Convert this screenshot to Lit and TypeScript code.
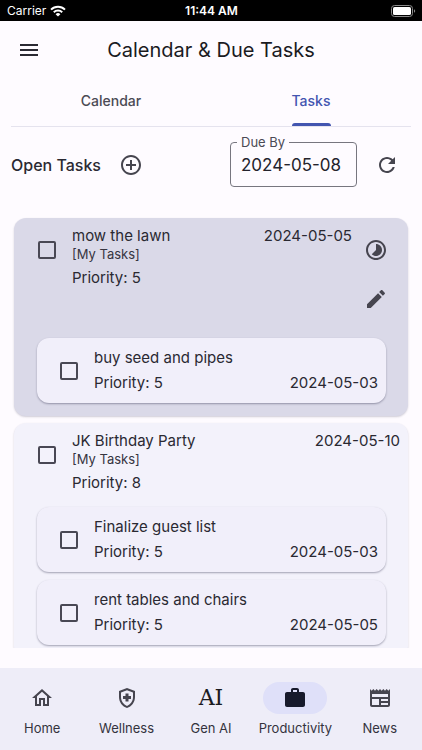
import { LitElement, html, css, svg, nothing } from "lit";
import { customElement, property } from "lit/decorators.js";
import { classMap } from "lit/directives/class-map.js";

const ICONS: Record<string, string> = {
  menu: "M3 18h18v-2H3v2zm0-5h18v-2H3v2zm0-7v2h18V6H3z",
  add: "M13 7h-2v4H7v2h4v4h2v-4h4v-2h-4V7zm-1-5C6.48 2 2 6.48 2 12s4.48 10 10 10 10-4.48 10-10S17.52 2 12 2zm0 18c-4.41 0-8-3.59-8-8s3.59-8 8-8 8 3.59 8 8-3.59 8-8 8z",
  refresh:
    "M17.65 6.35C16.2 4.9 14.21 4 12 4c-4.42 0-7.99 3.58-7.99 8s3.57 8 7.99 8c3.73 0 6.84-2.55 7.73-6h-2.08c-.82 2.33-3.04 4-5.65 4-3.31 0-6-2.69-6-6s2.69-6 6-6c1.66 0 3.14.69 4.22 1.78L13 11h7V4l-2.35 2.35z",
  progress:
    "M16.24 7.76C15.07 6.59 13.54 6 12 6v6l-4.24 4.24c2.34 2.34 6.14 2.34 8.49 0 2.34-2.34 2.34-6.14-.01-8.48zM12 2C6.48 2 2 6.48 2 12s4.48 10 10 10 10-4.48 10-10S17.52 2 12 2zm0 18c-4.41 0-8-3.59-8-8s3.59-8 8-8 8 3.59 8 8-3.59 8-8 8z",
  edit: "M3 17.25V21h3.75L17.81 9.94l-3.75-3.75L3 17.25zM20.71 7.04c.39-.39.39-1.02 0-1.41l-2.34-2.34c-.39-.39-1.02-.39-1.41 0l-1.83 1.83 3.75 3.75 1.83-1.83z",
  home: "M12 5.69l5 4.5V18h-2v-6H9v6H7v-7.81l5-4.5M12 3L2 12h3v8h6v-6h2v6h6v-8h3L12 3z",
  wellness:
    "M10.5 13H8v-3h2.5V7.5h3V10H16v3h-2.5v2.5h-3V13zM12 2L4 5v6.09c0 5.05 3.41 9.76 8 10.91 4.59-1.15 8-5.86 8-10.91V5l-8-3zm6 9.09c0 4-2.55 7.7-6 8.83-3.45-1.13-6-4.82-6-8.83v-4.7l6-2.25 6 2.25v4.7z",
  work: "M20 6h-4V4c0-1.11-.89-2-2-2h-4c-1.11 0-2 .89-2 2v2H4c-1.11 0-1.99.89-1.99 2L2 19c0 1.11.89 2 2 2h16c1.11 0 2-.89 2-2V8c0-1.11-.89-2-2-2zm-6 0h-4V4h4v2z",
  news: "M22 3l-1.67 1.67L18.67 3 17 4.67 15.33 3l-1.66 1.67L12 3l-1.67 1.67L8.67 3 7 4.67 5.33 3 3.67 4.67 2 3v16c0 1.1.9 2 2 2h16c1.1 0 2-.9 2-2V3zM11 19H4v-6h7v6zm9 0h-7v-2h7v2zm0-4h-7v-2h7v2zm0-4H4V8h16v3z",
};

const icon = (name: string) =>
  html`<svg class="icon" viewBox="0 0 24 24" aria-hidden="true">${svg`<path d=${ICONS[name]} />`}</svg>`;

interface Task {
  title: string;
  list?: string;
  priority: number;
  due: string;
  started?: boolean;
  subtasks?: Task[];
}

const TASKS: Task[] = [
  {
    title: "mow the lawn",
    list: "[My Tasks]",
    priority: 5,
    due: "2024-05-05",
    started: true,
    subtasks: [{ title: "buy seed and pipes", priority: 5, due: "2024-05-03" }],
  },
  {
    title: "JK Birthday Party",
    list: "[My Tasks]",
    priority: 8,
    due: "2024-05-10",
    subtasks: [
      { title: "Finalize guest list", priority: 5, due: "2024-05-03" },
      { title: "rent tables and chairs", priority: 5, due: "2024-05-05" },
    ],
  },
];

const NAV = [
  { label: "Home", icon: "home" },
  { label: "Wellness", icon: "wellness" },
  { label: "Gen AI", icon: "" },
  { label: "Productivity", icon: "work", active: true },
  { label: "News", icon: "news" },
];

const shared = css`
  * {
    box-sizing: border-box;
  }
  button {
    display: grid;
    place-items: center;
    padding: 0;
    border: 0;
    background: none;
    color: inherit;
    font: inherit;
    cursor: pointer;
  }
  .icon {
    display: block;
    width: 24px;
    height: 24px;
    fill: currentColor;
  }
  .check {
    appearance: none;
    flex: none;
    width: 18px;
    height: 18px;
    margin: 0;
    border: 2px solid #494854;
    border-radius: 2px;
  }
  .check:checked {
    background: #4355b0;
    border-color: #4355b0;
  }
`;

@customElement("task-card")
class TaskCard extends LitElement {
  @property({ attribute: false }) task!: Task;

  static styles = [
    shared,
    css`
      :host {
        display: block;
      }
      .card {
        padding: 8px 8px 13px 23px;
        border-radius: 12px;
        background: #f3f2fb;
        box-shadow: 0 1px 2px rgba(40, 40, 70, 0.22);
      }
      .started {
        background: #dad9e8;
      }
      .head {
        display: flex;
        align-items: flex-start;
        min-height: 76px;
      }
      .started .head {
        min-height: 112px;
      }
      .head .check {
        margin: 15px 16px 0 1px;
      }
      .text {
        flex: 1;
        min-width: 0;
      }
      .row {
        display: flex;
        justify-content: space-between;
        line-height: 20px;
      }
      .list {
        font-size: 13px;
        line-height: 16px;
        color: #36353f;
      }
      .priority {
        margin-top: 6px;
        line-height: 20px;
      }
      .actions {
        display: grid;
        width: 48px;
        height: 97px;
        color: #46454f;
      }
      .subs {
        display: grid;
        gap: 8px;
        margin-right: 14px;
      }
      .sub {
        display: flex;
        align-items: center;
        gap: 16px;
        padding: 10px 8px 10px 23px;
        border-radius: 12px;
        background: #f1effa;
        box-shadow: 0 1px 2px rgba(40, 40, 70, 0.4);
      }
      .sub .row + .row {
        margin-top: 5px;
      }
    `,
  ];

  render() {
    const t = this.task;
    return html`
      <article class=${classMap({ card: true, started: !!t.started })}>
        <div class="head">
          <input class="check" type="checkbox" id="main" />
          <div class="text">
            <div class="row">
              <label for="main">${t.title}</label>
              <time>${t.due}</time>
            </div>
            <div class="list">${t.list}</div>
            <div class="priority">Priority: ${t.priority}</div>
          </div>
          ${t.started
            ? html`<div class="actions">
                <button aria-label="In progress">${icon("progress")}</button>
                <button aria-label="Edit">${icon("edit")}</button>
              </div>`
            : nothing}
        </div>
        <div class="subs">
          ${t.subtasks?.map(
            (s, i) => html`<div class="sub">
              <input class="check" type="checkbox" id="sub-${i}" />
              <div class="text">
                <div class="row"><label for="sub-${i}">${s.title}</label></div>
                <div class="row">
                  <span>Priority: ${s.priority}</span><time>${s.due}</time>
                </div>
              </div>
            </div>`
          )}
        </div>
      </article>
    `;
  }
}

@customElement("app-root")
class AppRoot extends LitElement {
  static styles = [
    shared,
    css`
      :host {
        display: flex;
        flex-direction: column;
        height: 100vh;
        background: #fefbff;
        color: #2a2932;
        font-family: Inter, "Liberation Sans", sans-serif;
        font-size: 15px;
      }
      .status {
        display: grid;
        grid-template-columns: 1fr auto 1fr;
        align-items: center;
        height: 21px;
        padding: 0 6px 0 7px;
        background: #000;
        color: #fff;
        font-size: 12px;
      }
      .carrier {
        display: flex;
        align-items: center;
        gap: 4px;
      }
      .wifi {
        width: 16px;
        height: 12px;
      }
      .clock {
        font-size: 12px;
        font-weight: 600;
      }
      .battery {
        justify-self: end;
        width: 25px;
        height: 12px;
      }
      .appbar {
        display: grid;
        grid-template-columns: 58px 1fr 58px;
        align-items: center;
        height: 57px;
      }
      .appbar button {
        height: 48px;
      }
      h1 {
        margin: 0;
        font-size: 20px;
        font-weight: 400;
        line-height: 28px;
        text-align: center;
        color: #1b1b1f;
        white-space: nowrap;
      }
      .tabs {
        display: grid;
        grid-template-columns: 1fr 1fr;
        flex: none;
        height: 49px;
        margin: 0 11px;
        border-bottom: 1px solid #e5e3ee;
        color: #4b4a54;
      }
      .tabs button {
        grid-template-rows: 1fr 3px;
        font-size: 14px;
        font-weight: 500;
      }
      .tabs .on {
        color: #4355b0;
      }
      .on::after {
        content: "";
        width: 39px;
        height: 3px;
        border-radius: 3px 3px 0 0;
        background: #4355b0;
      }
      .filter {
        display: flex;
        align-items: flex-end;
        padding: 8px 11px 29px;
      }
      h2 {
        margin: 0 6px 0 0;
        font-size: 16px;
        font-weight: 500;
        line-height: 44px;
      }
      .tool {
        width: 48px;
        height: 44px;
        color: #46454f;
      }
      .due {
        width: 127px;
        height: 52px;
        margin: 0 6px 0 auto;
        padding: 0 6px;
        border: 1px solid #77767f;
        border-radius: 4px;
      }
      .due legend {
        padding: 0 4px;
        font-size: 13px;
        line-height: 14px;
        color: #4b4a54;
      }
      .due input {
        display: block;
        width: 100%;
        height: 32px;
        padding: 0 0 0 4px;
        border: 0;
        outline: 0;
        background: none;
        color: #24232c;
        font: inherit;
        font-size: 17px;
      }
      .list {
        display: flex;
        flex-direction: column;
        flex: 1;
        gap: 7px;
        min-height: 0;
        margin-bottom: 20px;
        padding: 2px 14px 0 14px;
        overflow: hidden;
      }
      .nav {
        display: grid;
        grid-template-columns: repeat(5, 1fr);
        flex: none;
        padding: 14px 0;
        background: #eeedf8;
      }
      .nav a {
        display: grid;
        justify-items: center;
        gap: 6px;
        font-size: 13px;
        line-height: 16px;
        color: #34333d;
        text-decoration: none;
      }
      .pill {
        display: grid;
        place-items: center;
        width: 64px;
        height: 32px;
        border-radius: 16px;
        color: #46454f;
      }
      .active .pill {
        background: #dfe0f9;
        color: #171a2c;
      }
      .serif {
        font-family: "DejaVu Serif", serif;
        font-size: 22px;
        line-height: 32px;
        color: #1b1b1f;
      }
    `,
  ];

  render() {
    return html`
      <div class="status">
        <span class="carrier">
          Carrier
          <svg class="wifi" viewBox="0 0 16 12" aria-hidden="true">
            <g fill="none" stroke="#fff" stroke-width="2">
              <path d="M1 4.6a10 10 0 0 1 14 0" />
              <path d="M3.8 7.3a6 6 0 0 1 8.4 0" />
            </g>
            <path fill="#fff" d="M8 11.6L5.6 9.2a3.4 3.4 0 0 1 4.8 0z" />
          </svg>
        </span>
        <span class="clock">11:44 AM</span>
        <svg class="battery" viewBox="0 0 25 12" aria-hidden="true">
          <rect x="0.5" y="0.5" width="21" height="11" rx="3" fill="none" stroke="#8a8a8a" />
          <rect x="2" y="2" width="18" height="8" rx="1.6" fill="#fff" />
          <path d="M23 4.2c1.6.6 1.6 3 0 3.6z" fill="#8a8a8a" />
        </svg>
      </div>

      <header class="appbar">
        <button aria-label="Menu">${icon("menu")}</button>
        <h1>Calendar &amp; Due Tasks</h1>
      </header>

      <div class="tabs" role="tablist">
        <button role="tab" aria-selected="false">Calendar</button>
        <button class="on" role="tab" aria-selected="true">Tasks</button>
      </div>

      <div class="filter">
        <h2>Open Tasks</h2>
        <button class="tool" aria-label="Add task">${icon("add")}</button>
        <fieldset class="due">
          <legend><label for="due">Due By</label></legend>
          <input id="due" type="text" value="2024-05-08" />
        </fieldset>
        <button class="tool" aria-label="Refresh">${icon("refresh")}</button>
      </div>

      <main class="list">${TASKS.map((t) => html`<task-card .task=${t}></task-card>`)}</main>

      <nav class="nav">
        ${NAV.map(
          (n) => html`<a href="#" class=${classMap({ active: !!n.active })}>
            <span class="pill">
              ${n.icon ? icon(n.icon) : html`<span class="serif">AI</span>`}
            </span>
            ${n.label}
          </a>`
        )}
      </nav>
    `;
  }
}
